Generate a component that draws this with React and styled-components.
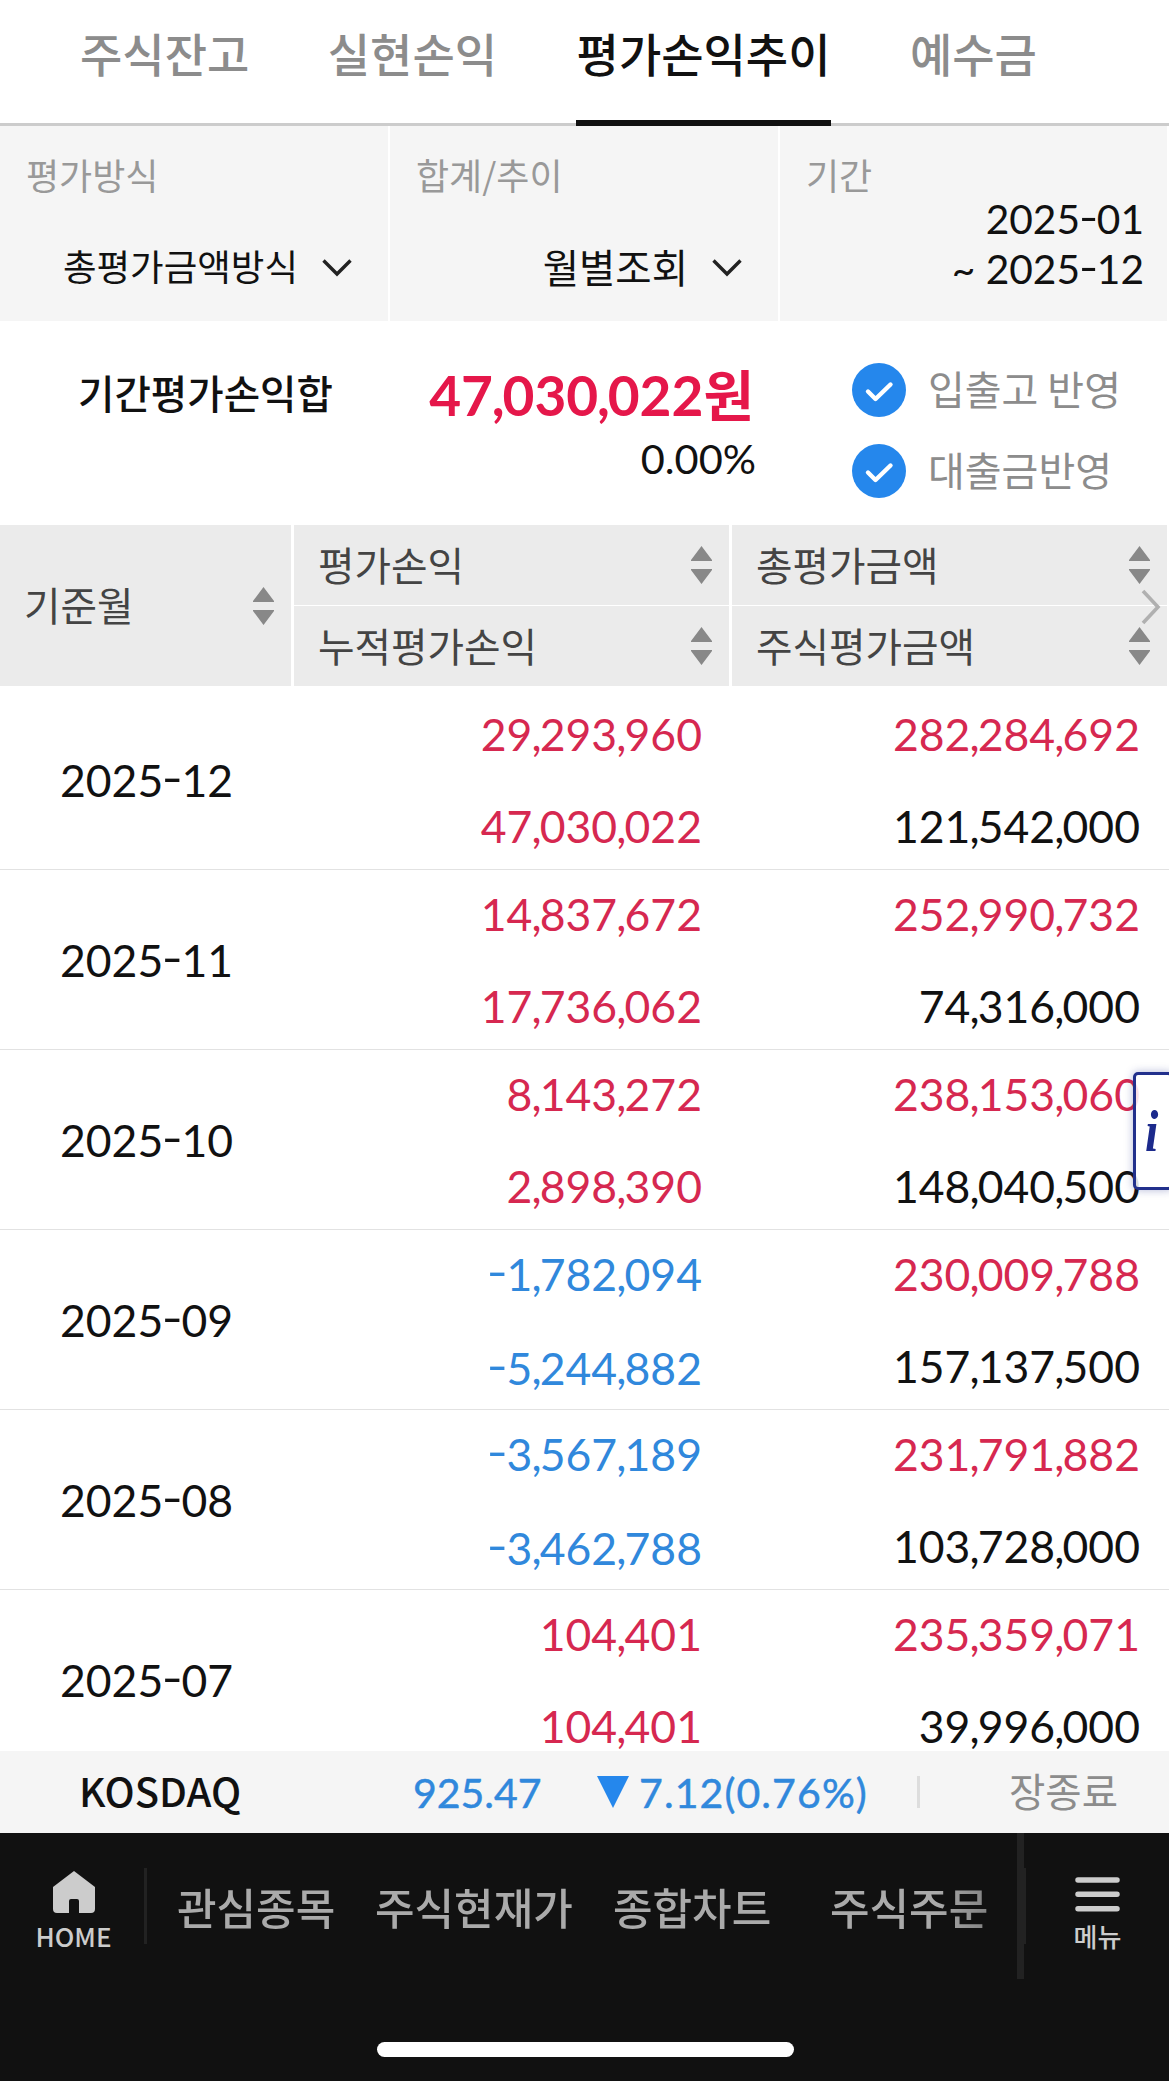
import React from "react";
import styled, { createGlobalStyle, css } from "styled-components";

const GlobalStyle = createGlobalStyle`
  * {
    box-sizing: border-box;
  }

  body {
    margin: 0;
    background-color: #fff;
    color: #111;
    font-family: "Noto Sans CJK KR", sans-serif;
  }
`;

const numberFont = css`
  font-family: Lato, "Noto Sans CJK KR", sans-serif;
`;

const Screen = styled.div`
  width: 1169px;
  height: 2081px;
  display: flex;
  flex-direction: column;
  overflow: hidden;
  white-space: nowrap;
`;

const Comma = styled.span`
  margin: 0 -0.04em 0 -0.022em;
`;

const Hyphen = styled.span`
  display: inline-block;
  margin: 0 0.02em;
  line-height: 1;
  vertical-align: 0.06em;
  transform: scaleX(1.3);
`;

const Tabs = styled.div`
  height: 126px;
  flex-shrink: 0;
  display: flex;
  padding-left: 80px;
  gap: 78.5px;
  border-bottom: 3px solid #ccc;
`;

const Tab = styled.div`
  height: 126px;
  padding: 0 ${({ $active }) => ($active ? 1 : 0)}px;
  font-size: 46px;
  font-weight: 500;
  line-height: 104px;
  color: ${({ $active }) => ($active ? "#111" : "#8c8c8c")};
  box-shadow: inset 0 -6px ${({ $active }) => ($active ? "#111" : "transparent")};
`;

const Filters = styled.div`
  height: 195px;
  flex-shrink: 0;
  display: grid;
  grid-template-columns: 388px 388px 387px;
  column-gap: 2px;
`;

const Filter = styled.div`
  padding: 22px 26px 0;
  background-color: #f5f5f5;
`;

const FilterLabel = styled.div`
  font-size: 36px;
  line-height: 52px;
  color: #999;
`;

const Select = styled.div`
  display: flex;
  justify-content: flex-end;
  align-items: center;
  gap: 24px;
  margin: 38px 10px 0 0;
  font-size: ${({ $size }) => $size}px;
  line-height: 56px;
`;

const SelectArrow = styled.svg`
  margin-top: 4px;
`;

const Period = styled.div`
  ${numberFont}
  margin: -6px -3px 0 0;
  font-size: 40.7px;
  line-height: 50px;
  text-align: right;
`;

const Summary = styled.div`
  height: 204px;
  flex-shrink: 0;
  display: grid;
  grid-template-columns: 333px 421px 1fr;
`;

const SummaryTitle = styled.div`
  padding: 42px 0 0 78px;
  font-size: 39.6px;
  font-weight: 500;
  line-height: 58px;
`;

const Total = styled.div`
  text-align: right;
`;

const TotalAmount = styled.div`
  ${numberFont}
  margin-top: 41px;
  font-size: 55px;
  font-weight: 700;
  line-height: 66px;
  color: #e5174a;
`;

const TotalRate = styled.div`
  ${numberFont}
  margin-right: -2px;
  font-size: 41.5px;
  line-height: 61px;
`;

const Options = styled.div`
  display: flex;
  flex-direction: column;
  gap: 27px;
  padding: 42px 0 0 98px;
`;

const Option = styled.div`
  height: 54px;
  display: flex;
  align-items: center;
  gap: 22px;
  color: #8c8c8c;
  font-size: 40px;
  line-height: 50px;
`;

const OptionLabel = styled.div`
  padding-bottom: 4px;
`;

const TableHead = styled.div`
  position: relative;
  height: 161px;
  flex-shrink: 0;
  display: grid;
  grid-template-columns: 291px 435px 435px;
  grid-template-rows: 80px 80px;
  gap: 1px 3px;
`;

const HeadCell = styled.div`
  display: flex;
  justify-content: space-between;
  align-items: center;
  padding: 0 17px 0 24px;
  grid-row: ${({ $tall }) => ($tall ? "span 2" : "auto")};
  background-color: #ebebeb;
  color: #444;
  font-size: 39.7px;
`;

const HeadLabel = styled.div`
  padding-bottom: 4px;
`;

const NextColumn = styled.svg`
  position: absolute;
  top: 64px;
  left: 1140px;
`;

const TableBody = styled.div`
  position: relative;
  height: 1065px;
  flex-shrink: 0;
  padding-top: 4px;
  overflow: hidden;
`;

const Row = styled.div`
  ${numberFont}
  height: 180px;
  display: grid;
  grid-template-columns: 291px 411px 438px;
  align-items: center;
  border-bottom: 1px solid #e2e2e2;
  font-size: 44.5px;
`;

const Month = styled.div`
  padding-left: 60px;
`;

const Amounts = styled.div`
  display: flex;
  flex-direction: column;
  gap: 46px;
  text-align: right;
`;

const tones = { up: "#d62850", down: "#3088dc", base: "#111" };

const Amount = styled.div`
  line-height: 46px;
  color: ${({ $tone }) => tones[$tone]};
`;

const InfoTab = styled.div`
  position: absolute;
  top: 386px;
  right: -4px;
  width: 40px;
  height: 118px;
  padding-left: 9px;
  border: 3px solid #22308c;
  border-radius: 5px;
  background-color: rgba(255, 255, 255, 0.85);
  box-shadow: 0 0 8px rgba(34, 48, 140, 0.35);
  color: #1c2a8c;
  font-family: "Liberation Serif", serif;
  font-size: 60px;
  font-style: italic;
  font-weight: 700;
  line-height: 112px;
`;

const InfoMark = styled.span`
  display: inline-block;
  transform: scaleX(0.8);
  transform-origin: left;
`;

const Ticker = styled.div`
  height: 82px;
  flex-shrink: 0;
  display: grid;
  grid-template-columns: 334px 184px 320px 80px 1fr;
  align-items: center;
  padding-left: 79px;
  background-color: #f5f5f5;
`;

const IndexName = styled.div`
  padding-bottom: 4px;
  font-size: 40px;
  font-weight: 500;
  line-height: 60px;
`;

const IndexValue = styled.div`
  ${numberFont}
  color: #3088dc;
  font-size: 41px;
  -webkit-text-stroke: 0.5px #3088dc;
`;

const IndexChange = styled(IndexValue)`
  display: flex;
  align-items: center;
  gap: 10px;
  letter-spacing: 1.1px;
`;

const MarketState = styled.div`
  height: 32px;
  grid-column: 4 / 6;
  padding-left: 89px;
  border-left: 3px solid #ddd;
  color: #8c8c8c;
  font-size: 39.5px;
  line-height: 28px;
`;

const Nav = styled.div`
  height: 248px;
  flex-shrink: 0;
  display: flex;
  flex-direction: column;
  background-color: #111;
`;

const NavBar = styled.div`
  height: 209px;
  display: flex;
`;

const NavButton = styled.div`
  width: ${({ $width }) => $width}px;
  display: flex;
  flex-direction: column;
  align-items: center;
  gap: 3px;
  padding: 38px 0 0 ${({ $inset }) => $inset || 0}px;
  color: #ccc;
  font-size: 26px;
  font-weight: 500;
  line-height: 40px;
`;

const NavLine = styled.div`
  width: ${({ $width }) => $width}px;
  height: 76px;
  margin-top: 35px;
  background-color: #222;
`;

const NavItems = styled.div`
  width: 870px;
  display: flex;
  padding-left: 30px;
  color: #aaa;
  font-size: 43px;
  font-weight: 500;
  line-height: 146px;
  mask-image: linear-gradient(to right, #000 790px, rgba(0, 0, 0, 0.6));
`;

const NavItem = styled.div`
  width: ${({ $width }) => $width}px;
`;

const ScrollEdge = styled.div`
  width: 7px;
  height: 146px;
  background-color: #222;
`;

const HomeIndicator = styled.div`
  width: 417px;
  height: 15px;
  margin-left: 377px;
  border-radius: 8px;
  background-color: #fff;
`;

const ChevronIcon = () => (
  <SelectArrow width="30" height="18" viewBox="0 0 30 18" fill="none">
    <path d="M1.5 1.5 15 15 28.5 1.5" stroke="#222" strokeWidth="3.4" />
  </SelectArrow>
);

const CheckIcon = () => (
  <svg width="54" height="54" viewBox="0 0 54 54" fill="none">
    <circle cx="27" cy="27" r="27" fill="#2587ec" />
    <path
      d="M16 28.5 23.5 36 38.5 21.5"
      stroke="#fff"
      strokeWidth="4.4"
      strokeLinecap="round"
      strokeLinejoin="round"
    />
  </svg>
);

const SortIcon = () => (
  <svg width="21" height="38" viewBox="0 0 21 38" fill="#888">
    <path d="M10.5 0 21 14v1H0v-1zM10.5 38 0 24v-1h21v1z" />
  </svg>
);

const HomeIcon = () => (
  <svg width="42" height="42" viewBox="0 0 42 42" fill="#ccc">
    <path d="M21 0 42 16v22q0 4-4 4H26V30q0-2-2-2h-6q-2 0-2 2v12H4q-4 0-4-4V16z" />
  </svg>
);

const MenuIcon = () => (
  <svg width="45" height="42" viewBox="0 0 45 42" stroke="#ccc" strokeWidth="5.5" strokeLinecap="round">
    <path d="M3 9h39M3 23.3h39M3 37.8h39" />
  </svg>
);

const rows = [
  { month: "2025-12", profit: "29,293,960", sum: "47,030,022", total: "282,284,692", stock: "121,542,000" },
  { month: "2025-11", profit: "14,837,672", sum: "17,736,062", total: "252,990,732", stock: "74,316,000" },
  { month: "2025-10", profit: "8,143,272", sum: "2,898,390", total: "238,153,060", stock: "148,040,500" },
  { month: "2025-09", profit: "-1,782,094", sum: "-5,244,882", total: "230,009,788", stock: "157,137,500" },
  { month: "2025-08", profit: "-3,567,189", sum: "-3,462,788", total: "231,791,882", stock: "103,728,000" },
  { month: "2025-07", profit: "104,401", sum: "104,401", total: "235,359,071", stock: "39,996,000" },
];

const toneOf = (value) => (value.startsWith("-") ? "down" : "up");

// tightens the commas and lifts the hyphens to the middle of the digits
const Figure = ({ value }) =>
  value.split(/([,-])/).map((part, index) => {
    if (part === ",") return <Comma key={index}>,</Comma>;
    if (part === "-") return <Hyphen key={index}>-</Hyphen>;
    return part;
  });

const App = () => {
  return (
    <Screen>
      <GlobalStyle />
      <Tabs>
        <Tab>주식잔고</Tab>
        <Tab>실현손익</Tab>
        <Tab $active>평가손익추이</Tab>
        <Tab>예수금</Tab>
      </Tabs>
      <Filters>
        <Filter>
          <FilterLabel>평가방식</FilterLabel>
          <Select $size={36.5}>
            총평가금액방식
            <ChevronIcon />
          </Select>
        </Filter>
        <Filter>
          <FilterLabel>합계/추이</FilterLabel>
          <Select $size={39.5}>
            월별조회
            <ChevronIcon />
          </Select>
        </Filter>
        <Filter>
          <FilterLabel>기간</FilterLabel>
          <Period>
            <Figure value="2025-01" />
            <br />
            <Figure value="~ 2025-12" />
          </Period>
        </Filter>
      </Filters>
      <Summary>
        <SummaryTitle>기간평가손익합</SummaryTitle>
        <Total>
          <TotalAmount>
            <Figure value="47,030,022원" />
          </TotalAmount>
          <TotalRate>0.00%</TotalRate>
        </Total>
        <Options>
          <Option>
            <CheckIcon />
            <OptionLabel>입출고 반영</OptionLabel>
          </Option>
          <Option>
            <CheckIcon />
            <OptionLabel>대출금반영</OptionLabel>
          </Option>
        </Options>
      </Summary>
      <TableHead>
        <HeadCell $tall>
          <HeadLabel>기준월</HeadLabel>
          <SortIcon />
        </HeadCell>
        {["평가손익", "총평가금액", "누적평가손익", "주식평가금액"].map((label) => (
          <HeadCell key={label}>
            <HeadLabel>{label}</HeadLabel>
            <SortIcon />
          </HeadCell>
        ))}
        <NextColumn width="22" height="36" viewBox="0 0 22 36" fill="none">
          <path d="M3 2 18 18 3 34" stroke="#b0b0b0" strokeWidth="3.6" />
        </NextColumn>
      </TableHead>
      <TableBody>
        {rows.map((row) => (
          <Row key={row.month}>
            <Month>
              <Figure value={row.month} />
            </Month>
            <Amounts>
              <Amount $tone={toneOf(row.profit)}>
                <Figure value={row.profit} />
              </Amount>
              <Amount $tone={toneOf(row.sum)}>
                <Figure value={row.sum} />
              </Amount>
            </Amounts>
            <Amounts>
              <Amount $tone="up">
                <Figure value={row.total} />
              </Amount>
              <Amount $tone="base">
                <Figure value={row.stock} />
              </Amount>
            </Amounts>
          </Row>
        ))}
        <InfoTab>
          <InfoMark>i</InfoMark>
        </InfoTab>
      </TableBody>
      <Ticker>
        <IndexName>KOSDAQ</IndexName>
        <IndexValue>925.47</IndexValue>
        <IndexChange>
          <svg width="32" height="32" viewBox="0 0 32 32" fill="#2587ec">
            <path d="M0 0h32L16 32z" />
          </svg>
          7.12(0.76%)
        </IndexChange>
        <MarketState>장종료</MarketState>
      </Ticker>
      <Nav>
        <NavBar>
          <NavButton $width={144} $inset={3}>
            <HomeIcon />
            HOME
          </NavButton>
          <NavLine $width={3} />
          <NavItems>
            <NavItem $width={198}>관심종목</NavItem>
            <NavItem $width={238}>주식현재가</NavItem>
            <NavItem $width={217}>종합차트</NavItem>
            <NavItem $width={160}>주식주문</NavItem>
          </NavItems>
          <ScrollEdge />
          <NavLine $width={2} />
          <NavButton $width={143}>
            <MenuIcon />
            메뉴
          </NavButton>
        </NavBar>
        <HomeIndicator />
      </Nav>
    </Screen>
  );
};

export default App;
